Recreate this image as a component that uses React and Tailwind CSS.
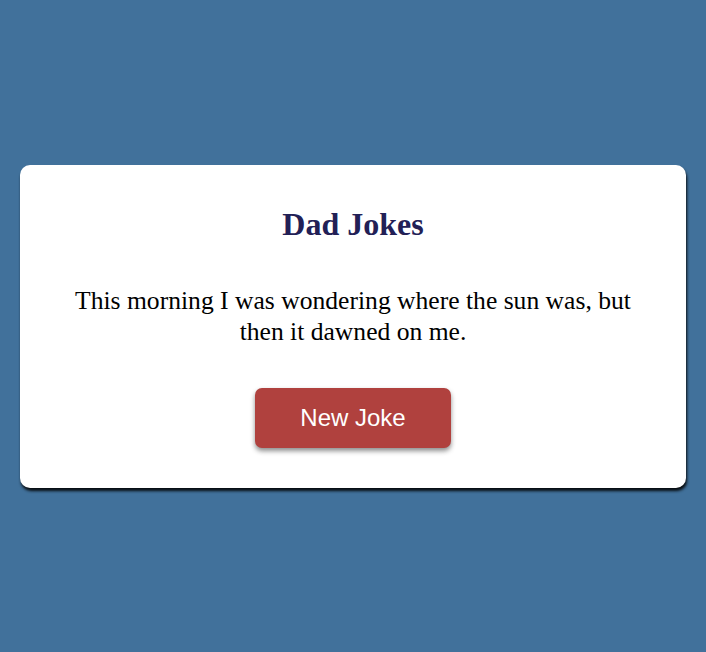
export default function App() {
  return (
    <div className="min-h-[652px] w-full bg-[#41719b] flex items-center justify-center px-5">
      <div className="w-full bg-white rounded-[10px] shadow-[1px_3px_3px_rgba(0,0,0,0.9)] flex flex-col items-center text-center pt-[41px] pb-[40px] px-[40px]">
        <h1 className="font-['Liberation_Serif',serif] font-bold text-[32px] leading-[36px] text-[#222056]">
          Dad Jokes
        </h1>
        <p className="mt-[43px] font-['Liberation_Serif',serif] text-[25.6px] leading-[31px] text-black max-w-[575px]">
          This morning I was wondering where the sun was, but then it dawned on me.
        </p>
        <button className="mt-[41px] w-[196px] h-[60px] rounded-[7px] bg-[#b0413e] text-white text-[24px] font-['Liberation_Sans',sans-serif] shadow-[0_3px_5px_rgba(0,0,0,0.45)]">
          New Joke
        </button>
      </div>
    </div>
  )
}
